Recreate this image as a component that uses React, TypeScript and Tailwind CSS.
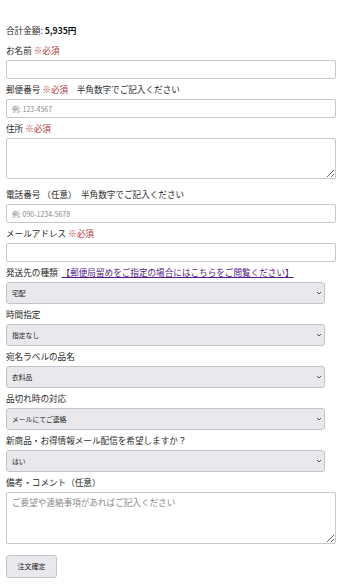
import React from "react";

const font = { fontFamily: '"Noto Sans CJK JP", "Noto Sans", sans-serif' };

const labelCls = "block h-[12px] leading-[12px] text-[8.6px] whitespace-nowrap";
const inputCls =
  "block w-[330px] h-[19px] border border-[#c8c8c8] rounded-[2px] bg-white px-[5px] text-[7px] text-[#333] placeholder:text-[#8a8a8a] outline-none";
const areaCls =
  "block w-[330px] border border-[#c8c8c8] rounded-[2px] bg-white px-[5px] py-[3px] text-[8.6px] leading-[12px] text-[#333] placeholder:text-[#8a8a8a] outline-none";

function Req() {
  return <span className="text-[#b03a3a]"> ※必須</span>;
}

function Select({ value }: { value: string }) {
  return (
    <div className="relative w-[319px] h-[22px]">
      <select
        defaultValue={value}
        className="appearance-none block w-full h-full bg-[#e9e9ed] border border-[#c3c3c9] rounded-[3px] pl-[5px] text-[6.8px] text-[#222] outline-none"
      >
        <option>{value}</option>
      </select>
      <svg
        className="absolute right-[3px] top-[9px] pointer-events-none"
        width="6"
        height="4"
        viewBox="0 0 6 4"
      >
        <path d="M1 1 L3 3 L5 1" fill="none" stroke="#555" strokeWidth="1" />
      </svg>
    </div>
  );
}

export default function App() {
  return (
    <div className="min-h-[584px] bg-white px-[6px] pt-[24px] text-[#2a2a2a]" style={font}>
      <p className={labelCls}>
        合計金額: <b className="font-bold text-[#111]">5,935円</b>
      </p>

      {/* お名前 */}
      <label className={`${labelCls} mt-[8px] mb-[4px]`}>
        お名前<Req />
      </label>
      <input className={inputCls} />

      <label className={`${labelCls} mt-[4px] mb-[4px]`}>
        郵便番号<Req />　半角数字でご記入ください
      </label>
      <input className={inputCls} placeholder="例: 123-4567" />

      <label className={`${labelCls} mt-[4px] mb-[4px]`}>
        住所<Req />
      </label>
      <textarea className={`${areaCls} h-[41px]`} />

      <label className={`${labelCls} mt-[9px] mb-[4px]`}>
        電話番号 （任意）　半角数字でご記入ください
      </label>
      <input className={inputCls} placeholder="例: 090-1234-5678" />

      <label className={`${labelCls} mt-[4px] mb-[4px]`}>
        メールアドレス<Req />
      </label>
      <input className={inputCls} />

      <label className={`${labelCls} mt-[4px] mb-[4px]`}>
        発送先の種類　
        <a href="#" className="ml-[4px] text-[#551a8b] underline">
          【郵便局留めをご指定の場合にはこちらをご閲覧ください】
        </a>
      </label>
      <Select value="宅配" />

      <label className={`${labelCls} mt-[4px] mb-[4px]`}>時間指定</label>
      <Select value="指定なし" />

      <label className={`${labelCls} mt-[4px] mb-[4px]`}>宛名ラベルの品名</label>
      <Select value="衣料品" />

      <label className={`${labelCls} mt-[4px] mb-[4px]`}>品切れ時の対応</label>
      <Select value="メールにてご連絡" />

      <label className={`${labelCls} mt-[4px] mb-[4px]`}>
        新商品・お得情報メール配信を希望しますか？
      </label>
      <Select value="はい" />

      <label className={`${labelCls} mt-[4px] mb-[4px]`}>備考・コメント（任意）</label>
      <textarea
        className={`${areaCls} h-[52px]`}
        placeholder="ご要望や連絡事項があればご記入ください"
      />

      <button className="mt-[11px] w-[51px] h-[23px] bg-[#e9e9ed] border border-[#c3c3c9] rounded-[3px] text-[7px] text-[#222]">
        注文確定
      </button>
    </div>
  );
}
